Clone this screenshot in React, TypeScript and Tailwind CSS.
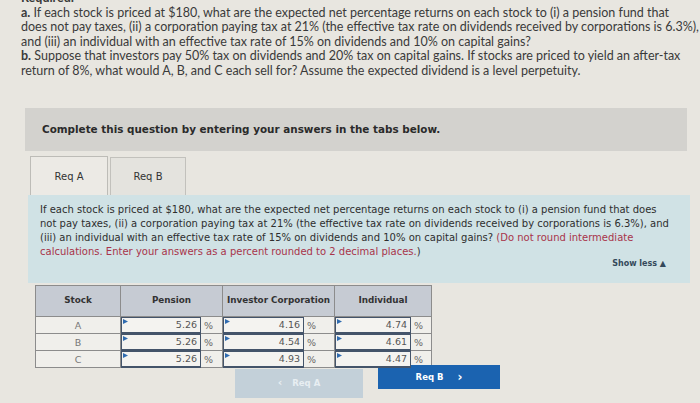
import React from 'react';

const rows = [
  { stock: 'A', pension: '5.26', corp: '4.16', indiv: '4.74' },
  { stock: 'B', pension: '5.26', corp: '4.54', indiv: '4.61' },
  { stock: 'C', pension: '5.26', corp: '4.93', indiv: '4.47' },
];

const Flag = () => (
  <svg className="absolute left-[1px] top-[1px]" width="5" height="5" viewBox="0 0 5 5">
    <path d="M0 0 L5 2.5 L0 5 Z" fill="#2f6bb0" />
  </svg>
);

const InputCell: React.FC<{ value: string; inputW: string }> = ({ value, inputW }) => (
  <div className="flex h-full">
    <div className={`relative ${inputW} h-full border border-[#44546a] border-b-2 bg-[#f4f3f0] flex items-center justify-end pr-[3px] text-[#555]`}>
      <Flag />
      {value}
    </div>
    <div className="flex-1 flex items-center pl-[3px] text-[#666]">%</div>
  </div>
);

export default function App() {
  return (
    <div className="w-[700px] h-[403px] overflow-hidden bg-[#e8e6e0]">
      <div className="pl-[21px] mt-[-9px] text-[12.5px] leading-[14.5px] text-[#3a3a3a] [font-family:Lato,'Open_Sans',sans-serif] whitespace-nowrap">
        <div className="font-bold">Required:</div>
        <div><span className="font-bold">a.</span> If each stock is priced at $180, what are the expected net percentage returns on each stock to (i) a pension fund that</div>
        <div>does not pay taxes, (ii) a corporation paying tax at 21% (the effective tax rate on dividends received by corporations is 6.3%),</div>
        <div>and (iii) an individual with an effective tax rate of 15% on dividends and 10% on capital gains?</div>
        <div><span className="font-bold">b.</span> Suppose that investors pay 50% tax on dividends and 20% tax on capital gains. If stocks are priced to yield an after-tax</div>
        <div>return of 8%, what would A, B, and C each sell for? Assume the expected dividend is a level perpetuity.</div>
      </div>

      <div className="[font-family:'DejaVu_Sans',Verdana,sans-serif]">
        <div className="ml-[25px] mt-[30px] w-[662px] h-[43px] bg-[#d3d2ce] flex items-center pl-[17px] text-[10.4px] font-bold text-[#2a2a2a] whitespace-nowrap">
          Complete this question by entering your answers in the tabs below.
        </div>

        <div className="ml-[30px] mt-[5px] flex items-end h-[39px]">
          <div className="w-[78px] h-[39px] border border-b-0 border-[#bdbcb7] bg-[#eceae5] flex items-center justify-center text-[10px] text-[#333]">
            Req A
          </div>
          <div className="ml-[2px] w-[76px] h-[38px] border border-b-0 border-[#c2c1bc] bg-[#e4e3de] flex items-center justify-center text-[10px] text-[#333]">
            Req B
          </div>
        </div>

        <div className="ml-[28px] w-[662px] h-[88px] bg-[#d0e2e5] pl-[12px] pt-[8px] text-[10px] leading-[14px] text-[#2e2e2e] whitespace-nowrap">
          <div>If each stock is priced at $180, what are the expected net percentage returns on each stock to (i) a pension fund that does</div>
          <div>not pay taxes, (ii) a corporation paying tax at 21% (the effective tax rate on dividends received by corporations is 6.3%), and</div>
          <div>(iii) an individual with an effective tax rate of 15% on dividends and 10% on capital gains? <span className="text-[#a8344a]">(Do not round intermediate</span></div>
          <div className="text-[#a8344a]">calculations. Enter your answers as a percent rounded to 2 decimal places.<span className="text-[#2e2e2e]">)</span></div>
          <div className="flex justify-end pr-[24px] mt-[-1px] text-[8px] font-bold text-[#34495a] leading-[12px]">Show less ▲</div>
        </div>

        <div className="ml-[35px] mt-[2px] w-[397px] border border-[#8c8c8c] text-[9.5px] whitespace-nowrap">
          <div className="grid grid-cols-[85px_102px_112px_96px] h-[30px] bg-[#c6cbd3] font-bold text-[#333] text-[8.8px]">
            <div className="flex items-center justify-center border-r border-[#8c8c8c]">Stock</div>
            <div className="flex items-center justify-center border-r border-[#8c8c8c]">Pension</div>
            <div className="flex items-center justify-center border-r border-[#8c8c8c]">Investor Corporation</div>
            <div className="flex items-center justify-center">Individual</div>
          </div>
          {rows.map((r) => (
            <div key={r.stock} className="grid grid-cols-[85px_102px_112px_96px] h-[17px] border-t border-[#8c8c8c] bg-[#f0efeb]">
              <div className="flex items-center justify-center border-r border-[#8c8c8c] text-[#777]">{r.stock}</div>
              <div className="border-r border-[#8c8c8c]"><InputCell value={r.pension} inputW="w-[80px]" /></div>
              <div className="border-r border-[#8c8c8c]"><InputCell value={r.corp} inputW="w-[81px]" /></div>
              <div><InputCell value={r.indiv} inputW="w-[76px]" /></div>
            </div>
          ))}
        </div>

        <div className="flex items-start ml-[235px]">
          <div className="mt-[1px] w-[128px] h-[29px] bg-[#c3d0d9] flex items-center justify-center gap-[10px] text-[8.5px] font-bold text-[#e8eef2]">
            <span className="text-[11px]">‹</span>
            <span>Req A</span>
          </div>
          <div className="ml-[15px] mt-[-3px] w-[122px] h-[24px] bg-[#1b63b0] flex items-center justify-center gap-[14px] text-[8.5px] font-bold text-white">
            <span>Req B</span>
            <span className="text-[12px]">›</span>
          </div>
        </div>
      </div>
    </div>
  );
}
